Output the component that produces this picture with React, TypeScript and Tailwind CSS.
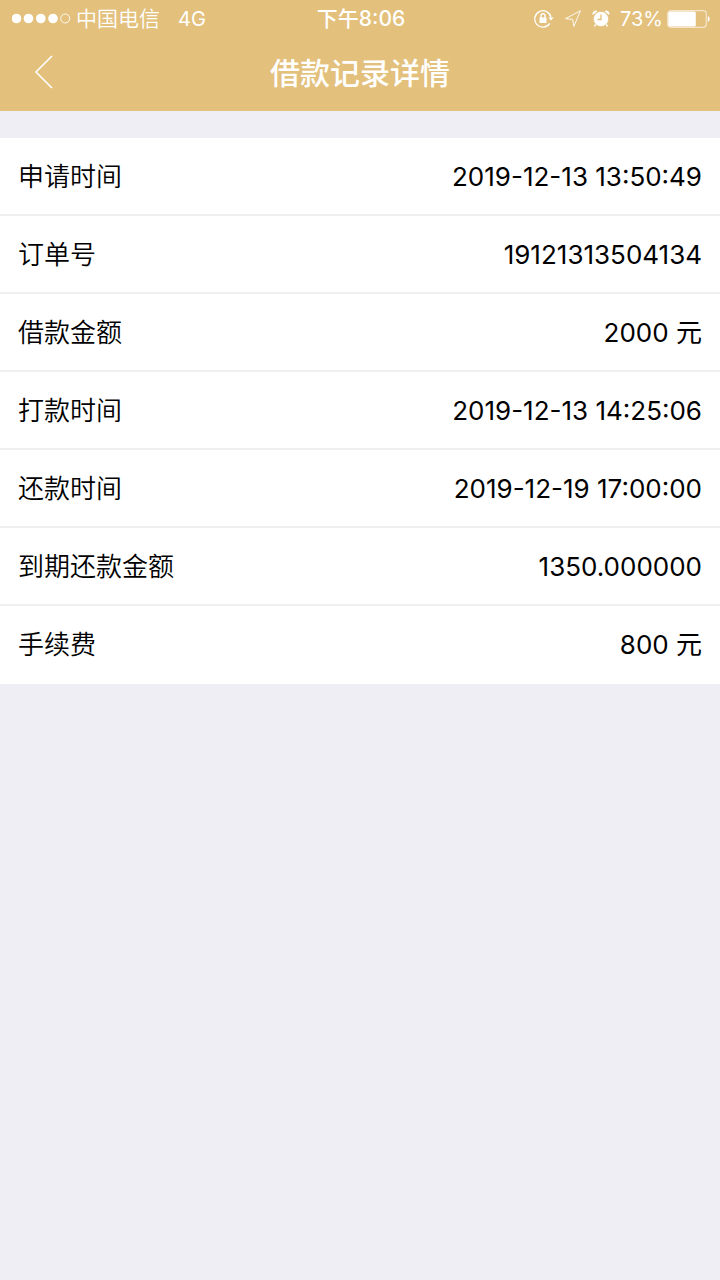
import React from 'react';

const rows = [
  { label: '申请时间', value: '2019-12-13 13:50:49' },
  { label: '订单号', value: '19121313504134' },
  { label: '借款金额', value: '2000 元' },
  { label: '打款时间', value: '2019-12-13 14:25:06' },
  { label: '还款时间', value: '2019-12-19 17:00:00' },
  { label: '到期还款金额', value: '1350.000000' },
  { label: '手续费', value: '800 元' },
];

function SignalDots() {
  return (
    <svg width="60" height="12" viewBox="0 0 60 12" fill="#fff" aria-hidden="true">
      <circle cx="4.500" cy="5.500" r="4.800" />
      <circle cx="16.500" cy="5.500" r="4.800" />
      <circle cx="28.800" cy="5.500" r="4.800" />
      <circle cx="41" cy="5.500" r="4.800" />
      <circle cx="53.200" cy="5.500" r="4.500" fill="none" stroke="#fff" strokeWidth="0.900" />
    </svg>
  );
}

function RotationLock() {
  return (
    <svg width="20" height="20" viewBox="0 0 20 20" fill="none" stroke="#fff" strokeWidth="1.300" aria-hidden="true">
      <path d="M15.800 14.400A8.200 8.200 0 1 1 17 8.500" />
      <path d="M14.300 8.500h5.400L17 11.500z" fill="#fff" stroke="none" />
      <rect x="5.500" y="8.500" width="7" height="5.500" rx="0.500" fill="#fff" stroke="none" />
      <path d="M7 9V6.800a2 2 0 0 1 4 0V9" strokeWidth="1.400" />
    </svg>
  );
}

function LocationArrow() {
  return (
    <svg width="18" height="18" viewBox="0 0 18 18" fill="none" stroke="#fff" strokeWidth="0.900" strokeLinejoin="round" aria-hidden="true">
      <path d="M16.500 0.700L1.500 8.700l7.200 .6 1.200 7z" />
    </svg>
  );
}

function AlarmClock() {
  return (
    <svg width="18" height="18" viewBox="0 0 18 18" aria-hidden="true">
      <path d="M0.800 5A3.200 3.200 0 0 1 5.600 1.200zM17.200 5A3.200 3.200 0 0 0 12.400 1.200z" fill="#fff" />
      <path d="M4 14l-1.500 2.300M14 14l1.500 2.300" stroke="#fff" strokeWidth="1.500" />
      <circle cx="9" cy="9" r="7.600" fill="#fff" stroke="#e3c07c" strokeWidth="0.600" />
      <path d="M9 4.500v5H5.500" stroke="#e3c07c" strokeWidth="1.300" fill="none" />
    </svg>
  );
}

function Battery() {
  return (
    <svg width="43" height="18" viewBox="0 0 43 18" aria-hidden="true">
      <rect x="0.700" y="0.700" width="38.600" height="16.600" rx="3" fill="none" stroke="#fff" strokeOpacity="0.600" strokeWidth="1.200" />
      <rect x="1.300" y="1.500" width="27.500" height="15" rx="1.500" fill="#fff" />
      <path d="M40.800 6a3.300 3.300 0 0 1 0 6z" fill="#fff" />
    </svg>
  );
}

export default function App() {
  return (
    <div className="min-h-screen bg-[#efeef4] font-['Inter','Noto_Sans_CJK_SC',sans-serif] text-black">
      <header className="bg-[#e3c07c] pb-1 text-white">
        <div className="grid h-[37px] grid-cols-[1fr_auto_1fr] items-center pl-3 pr-2.5 text-[21px] leading-[37px]">
          <div className="flex items-center gap-1">
            <SignalDots />
            <span className="font-[350]">中国电信</span>
            <span className="ml-3.5 text-xl">4G</span>
          </div>
          <time className="font-medium">下午8:06</time>
          <div className="flex items-center justify-end">
            <RotationLock />
            <span className="ml-2.5"><LocationArrow /></span>
            <span className="ml-2.5"><AlarmClock /></span>
            <span className="ml-2.5 text-xl">73%</span>
            <span className="ml-1"><Battery /></span>
          </div>
        </div>
        <div className="grid h-[70px] grid-cols-[80px_1fr_80px] items-center">
          <button type="button" aria-label="返回" className="flex h-full items-center pl-8">
            <svg width="22" height="36" viewBox="0 0 22 36" fill="none" stroke="#fff" strokeWidth="1.600" aria-hidden="true">
              <path d="M20 2L4 18l16 16" />
            </svg>
          </button>
          <h1 className="pt-0.5 text-center text-3xl font-medium">借款记录详情</h1>
        </div>
      </header>
      <main className="pt-[27px]">
        <dl className="bg-white text-[26px]">
          {rows.map((row) => (
            <div
              key={row.label}
              className="flex h-[78px] items-center justify-between border-b-2 border-[#f0f0f2] px-[18px] last:border-transparent"
            >
              <dt className="font-[350]">{row.label}</dt>
              <dd>{row.value}</dd>
            </div>
          ))}
        </dl>
      </main>
    </div>
  );
}
